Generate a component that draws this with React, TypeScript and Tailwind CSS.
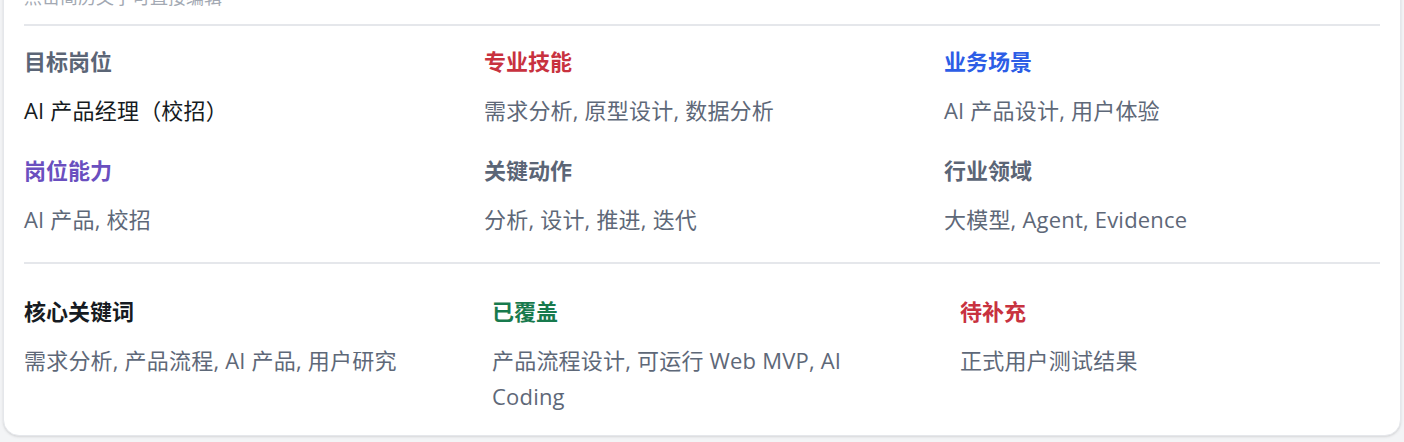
import React from "react"

type Field = {
  label: string
  value: string
  labelClass: string
  valueClass?: string
}

const topFields: Field[] = [
  { label: "目标岗位", value: "AI 产品经理（校招）", labelClass: "text-[#5b6576]", valueClass: "text-[#161b22]" },
  { label: "专业技能", value: "需求分析, 原型设计, 数据分析", labelClass: "text-[#c8323f]" },
  { label: "业务场景", value: "AI 产品设计, 用户体验", labelClass: "text-[#2c5de6]" },
  { label: "岗位能力", value: "AI 产品, 校招", labelClass: "text-[#6a4fbf]" },
  { label: "关键动作", value: "分析, 设计, 推进, 迭代", labelClass: "text-[#5b6576]" },
  { label: "行业领域", value: "大模型, Agent, Evidence", labelClass: "text-[#5b6576]" },
]

const bottomFields: Field[] = [
  { label: "核心关键词", value: "需求分析, 产品流程, AI 产品, 用户研究", labelClass: "text-[#161b22]" },
  { label: "已覆盖", value: "产品流程设计, 可运行 Web MVP, AI Coding", labelClass: "text-[#187a4d]" },
  { label: "待补充", value: "正式用户测试结果", labelClass: "text-[#c8323f]" },
]

function FieldBlock({ field }: { field: Field }) {
  return (
    <div className="flex flex-col">
      <div className={`text-[22px] leading-[30px] font-bold ${field.labelClass}`}>{field.label}</div>
      <div className={`mt-4 text-[22px] leading-[36px] tracking-[0.2px] ${field.valueClass ?? "text-[#5e6878]"}`}>
        {field.value}
      </div>
    </div>
  )
}

export default function App() {
  return (
    <div
      className="h-[442px] overflow-hidden bg-[#f3f4f6] px-[3px]"
      style={{ fontFamily: '"Open Sans", "Noto Sans CJK SC", sans-serif' }}
    >
      <div className="-mt-[38px] rounded-2xl border border-[#e5e7eb] bg-white px-5 pt-5 pb-[21px] shadow-sm">
        <div className="text-[18px] leading-[28px] text-[#a3a9b3]">点击简历文字可直接编辑</div>
        <div className="mt-[13px] h-[2px] bg-[#e5e7eb]" />

        <div className="grid grid-cols-3 gap-x-6 gap-y-[27px] pt-[20px] pb-[25px]">
          {topFields.map((f) => (
            <FieldBlock key={f.label} field={f} />
          ))}
        </div>

        <div className="h-[2px] bg-[#e5e7eb]" />

        <div className="grid grid-cols-3 gap-x-12 pt-[32px]">
          {bottomFields.map((f) => (
            <FieldBlock key={f.label} field={f} />
          ))}
        </div>
      </div>
    </div>
  )
}
